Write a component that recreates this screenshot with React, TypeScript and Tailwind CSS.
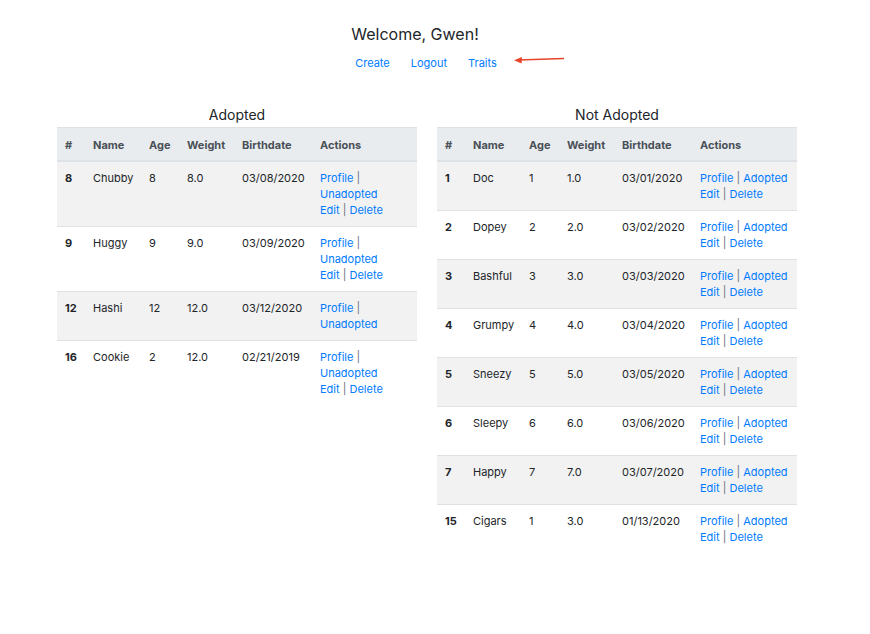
import React from "react";

type Row = { id: number; name: string; age: number; weight: string; birth: string; edit: boolean };

const adopted: Row[] = [
  { id: 8, name: "Chubby", age: 8, weight: "8.0", birth: "03/08/2020", edit: true },
  { id: 9, name: "Huggy", age: 9, weight: "9.0", birth: "03/09/2020", edit: true },
  { id: 12, name: "Hashi", age: 12, weight: "12.0", birth: "03/12/2020", edit: false },
  { id: 16, name: "Cookie", age: 2, weight: "12.0", birth: "02/21/2019", edit: true },
];

const notAdopted: Row[] = [
  { id: 1, name: "Doc", age: 1, weight: "1.0", birth: "03/01/2020", edit: true },
  { id: 2, name: "Dopey", age: 2, weight: "2.0", birth: "03/02/2020", edit: true },
  { id: 3, name: "Bashful", age: 3, weight: "3.0", birth: "03/03/2020", edit: true },
  { id: 4, name: "Grumpy", age: 4, weight: "4.0", birth: "03/04/2020", edit: true },
  { id: 5, name: "Sneezy", age: 5, weight: "5.0", birth: "03/05/2020", edit: true },
  { id: 6, name: "Sleepy", age: 6, weight: "6.0", birth: "03/06/2020", edit: true },
  { id: 7, name: "Happy", age: 7, weight: "7.0", birth: "03/07/2020", edit: true },
  { id: 15, name: "Cigars", age: 1, weight: "3.0", birth: "01/13/2020", edit: true },
];

function Sep() {
  return <span className="text-[#6c757d]"> | </span>;
}

function PetTable({ title, rows, adoptedTable }: { title: string; rows: Row[]; adoptedTable: boolean }) {
  return (
    <div className="w-[360px]">
      <div className="text-center text-[14px] leading-[20px] text-[#212529] mb-[2px]">{title}</div>
      <table className="w-[360px] table-fixed border-collapse text-[11px] leading-[16px] text-[#212529]">
        <colgroup>
          <col className="w-[28px]" />
          <col className="w-[56px]" />
          <col className="w-[38px]" />
          <col className="w-[55px]" />
          <col className="w-[78px]" />
          <col className="w-[105px]" />
        </colgroup>
        <thead>
          <tr className="bg-[#e9ecef] text-[#495057]">
            {["#", "Name", "Age", "Weight", "Birthdate", "Actions"].map((h) => (
              <th key={h} className="text-left font-bold px-[8px] pt-[9px] pb-[7px] border-t border-b-2 border-[#dee2e6]">
                {h}
              </th>
            ))}
          </tr>
        </thead>
        <tbody>
          {rows.map((r, i) => (
            <tr key={r.id} className={i % 2 === 0 ? "bg-[#f2f2f2]" : "bg-white"}>
              <td className="align-top px-[8px] py-[8px] border-t border-[#dee2e6] font-bold">{r.id}</td>
              <td className="align-top px-[8px] py-[8px] border-t border-[#dee2e6]">{r.name}</td>
              <td className="align-top px-[8px] py-[8px] border-t border-[#dee2e6]">{r.age}</td>
              <td className="align-top px-[8px] py-[8px] border-t border-[#dee2e6]">{r.weight}</td>
              <td className="align-top px-[8px] py-[8px] border-t border-[#dee2e6] whitespace-nowrap">{r.birth}</td>
              <td className="align-top px-[8px] py-[8px] border-t border-[#dee2e6]">
                {adoptedTable ? (
                  <>
                    <div>
                      <a className="text-[#007bff]">Profile</a>
                      <span className="text-[#6c757d]"> |</span>
                    </div>
                    <div>
                      <a className="text-[#007bff]">Unadopted</a>
                    </div>
                  </>
                ) : (
                  <div className="whitespace-nowrap">
                    <a className="text-[#007bff]">Profile</a>
                    <Sep />
                    <a className="text-[#007bff]">Adopted</a>
                  </div>
                )}
                {r.edit && (
                  <div className="whitespace-nowrap">
                    <a className="text-[#007bff]">Edit</a>
                    <Sep />
                    <a className="text-[#007bff]">Delete</a>
                  </div>
                )}
              </td>
            </tr>
          ))}
        </tbody>
      </table>
    </div>
  );
}

export default function App() {
  return (
    <div className="min-h-[634px] bg-white font-['Inter','Liberation_Sans',sans-serif] text-[#212529]">
      <div className="w-[830px] pt-[23px]">
        <h1 className="text-center text-[16px] leading-[22px] font-normal text-[#212529]">Welcome, Gwen!</h1>
        <div className="mt-[10px] flex justify-center pl-[22px] gap-[21px] text-[11px] leading-[16px] text-[#007bff]">
          <a>Create</a>
          <a>Logout</a>
          <span className="relative">
            <a>Traits</a>
            <svg className="absolute left-[46px] top-[1px]" width="52" height="10" viewBox="0 0 52 10">
              <line x1="4" y1="4" x2="50" y2="2.5" stroke="#e8442a" strokeWidth="1.5" />
              <path d="M0 4.2 L8 1 L7.5 7.5 Z" fill="#e8442a" />
            </svg>
          </span>
        </div>
      </div>
      <div className="flex gap-[20px] pl-[57px] mt-[34px]">
        <PetTable title="Adopted" rows={adopted} adoptedTable />
        <PetTable title="Not Adopted" rows={notAdopted} adoptedTable={false} />
      </div>
    </div>
  );
}
